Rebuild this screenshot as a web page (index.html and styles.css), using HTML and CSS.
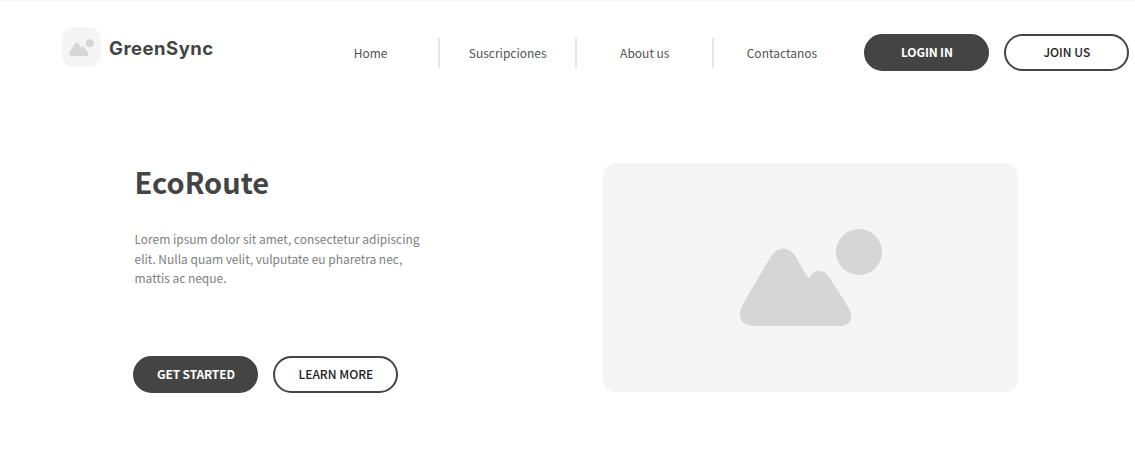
FILE: index.html
```html
<!DOCTYPE html>
<html lang="es">
<head>
<meta charset="utf-8">
<title>GreenSync</title>
<link rel="stylesheet" href="styles.css">
</head>
<body>
<svg class="defs" aria-hidden="true">
  <symbol id="picture" viewBox="20 18 142 98">
    <path d="M50 48 C58 35.500 68.500 35.500 76 47 C80 54.500 84 62 88.500 68.500 C93.500 59 103.500 58.500 109 67 C116 77.500 122 87 129 98.500 C134 108 130.500 116 120.500 116 L36 116 C22 116 16.500 108 22 96 C31 80 40 65 50 48 Z"/>
    <circle cx="139" cy="42" r="23"/>
  </symbol>
</svg>
<header class="header">
  <a class="brand">
    <span class="brand-icon"><svg class="brand-picture"><use href="#picture"/></svg></span>
    <span class="brand-name">GreenSync</span>
  </a>
  <nav class="nav">
    <a class="nav-item">Home</a>
    <a class="nav-item">Suscripciones</a>
    <a class="nav-item">About us</a>
    <a class="nav-item">Contactanos</a>
  </nav>
  <div class="actions">
    <button class="button button-dark">LOGIN IN</button>
    <button class="button button-light">JOIN US</button>
  </div>
</header>
<main class="hero">
  <section class="intro">
    <h1 class="title">EcoRoute</h1>
    <p class="text">Lorem ipsum dolor sit amet, consectetur adipiscing<br>elit. Nulla quam velit, vulputate eu pharetra nec,<br>mattis ac neque.</p>
    <div class="actions">
      <button class="button button-dark">GET STARTED</button>
      <button class="button button-light">LEARN MORE</button>
    </div>
  </section>
  <div class="media"><svg class="media-picture"><use href="#picture"/></svg></div>
</main>
</body>
</html>
```
FILE: styles.css
```css
* { box-sizing: border-box; }
body {
  margin: 0;
  height: 476px;
  overflow: hidden;
  border-top: 1px solid #f4f4f4;
  background: #fff;
  color: #444;
  font-family: "Noto Sans CJK SC", "Noto Sans", sans-serif;
}
.defs { display: none; }
.header {
  display: flex;
  align-items: flex-start;
  height: 162px;
  padding: 26px 0 0 62px;
}
.brand {
  display: flex;
  align-items: center;
  gap: 8px;
  width: 240px;
}
.brand-icon {
  display: flex;
  align-items: center;
  justify-content: center;
  width: 39px;
  height: 40px;
  border-radius: 12px;
  background: #f5f5f5;
}
.brand-picture { width: 25px; height: 17px; fill: #d6d6d6; }
.brand-name {
  padding-top: 1px;
  font: 700 18.500px/24px Inter, sans-serif;
  letter-spacing: 0.5px;
}
.nav {
  display: flex;
  width: 547.500px;
  margin-top: 11px;
}
.nav-item {
  flex: 1;
  height: 30px;
  font-size: 12px;
  line-height: 29px;
  text-align: center;
  color: #535353;
}
.nav-item:first-child { padding-left: 1px; }
.nav-item + .nav-item { border-left: 2px solid #e6e6e6; }
.actions { display: flex; gap: 15px; }
.header .actions { margin: 7px 0 0 14.900px; }
.button {
  width: 125px;
  height: 37px;
  padding: 0 0 2px;
  border: 2px solid #444;
  border-radius: 19px;
  font: 500 12px/31px "Noto Sans CJK SC", sans-serif;
  white-space: nowrap;
}
.button-dark { background: #444; color: #fff; font-weight: 700; letter-spacing: -0.15px; }
.button-light { background: #fff; color: #222; }
.hero {
  display: flex;
  padding-left: 134px;
}
.intro { width: 469.400px; }
.title {
  margin: 0;
  padding-left: 0.600px;
  font-size: 29px;
  font-weight: 700;
  line-height: 36px;
}
.text {
  margin: 30px 0 68px;
  padding-left: 0.500px;
  font-size: 12px;
  letter-spacing: -0.02px;
  line-height: 19.500px;
  color: #808080;
}
.intro .actions { margin-left: -0.600px; }
.media {
  display: flex;
  justify-content: center;
  width: 414.500px;
  height: 229px;
  padding-top: 65px;
  border-radius: 13px;
  background: #f5f5f5;
}
.media-picture { width: 142px; height: 98px; fill: #d6d6d6; }
```
